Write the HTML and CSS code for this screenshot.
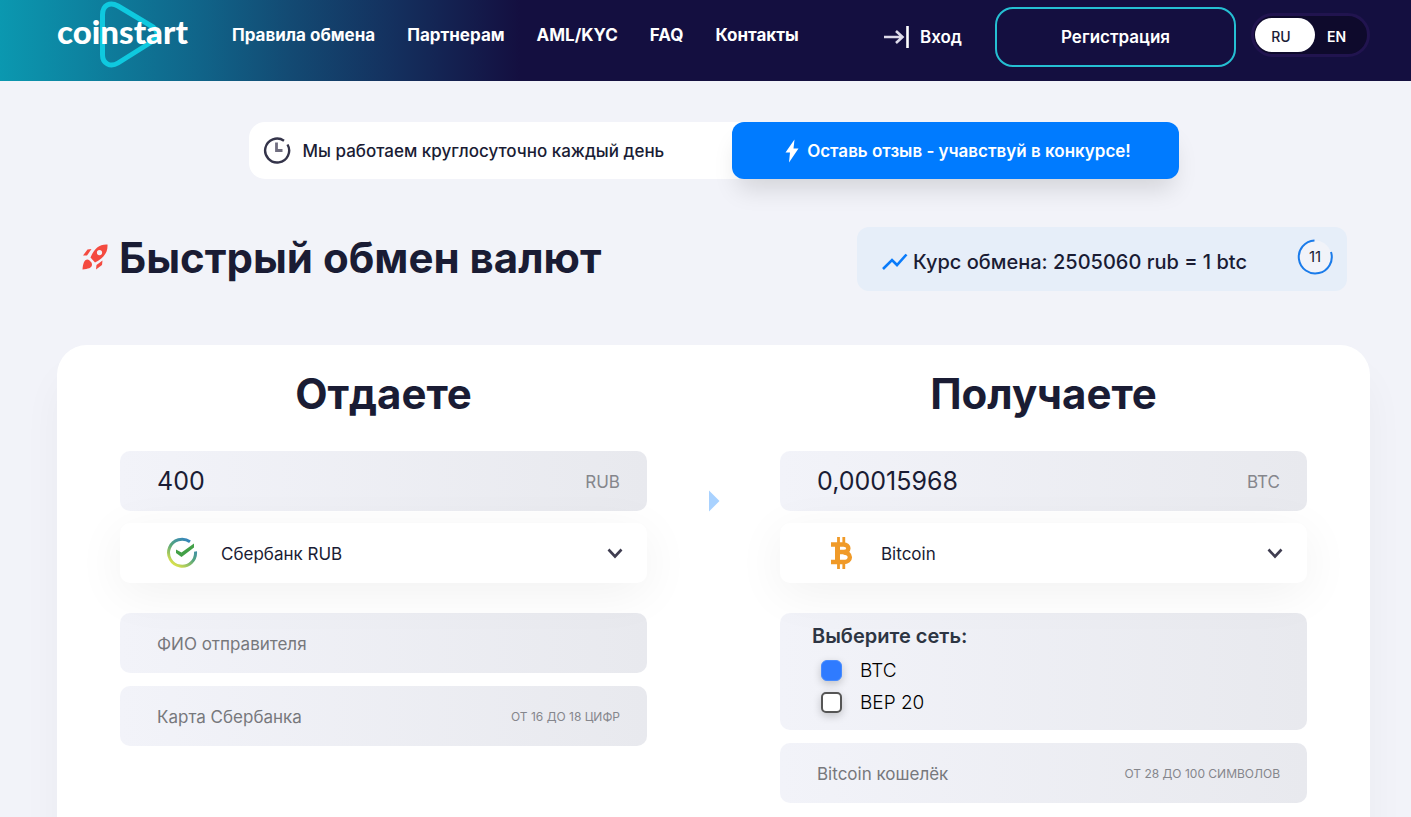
FILE: index.html
```html
<!DOCTYPE html>
<html lang="ru">
<head>
<meta charset="utf-8">
<meta name="viewport" content="width=device-width, initial-scale=1">
<title>Coinstart</title>
<link rel="stylesheet" href="styles.css">
</head>
<body>
<header class="header">
  <a class="logo" href="#">
    <svg class="logo-mark" width="64" height="68" viewBox="0 0 64 68" fill="none" stroke="#0fc9df" stroke-width="5" stroke-linejoin="round"><path d="M4.500 14C4.500 4 12 0.500 20 5L55 26Q63 33 55 40L20 62C12 67 4.500 62 4.500 54Z"/></svg>
    <span class="logo-text">coinstart</span>
  </a>
  <nav class="nav">
    <a href="#">Правила обмена</a>
    <a href="#">Партнерам</a>
    <a href="#">AML/KYC</a>
    <a href="#">FAQ</a>
    <a href="#">Контакты</a>
  </nav>
  <a class="login" href="#">
    <svg width="26" height="24" viewBox="0 0 26 24" fill="none" stroke="#fff"><path d="M0 12H18M12 6L18.500 12L12 18" stroke-width="2.600" stroke="#dedbea"/><path d="M23.500 1V23" stroke-width="2.600"/></svg>
    Вход
  </a>
  <button class="register" type="button">Регистрация</button>
  <div class="lang">
    <button class="lang-item lang-active" type="button">RU</button>
    <button class="lang-item" type="button">EN</button>
  </div>
</header>

<main class="main">
  <div class="notice">
    <div class="notice-info">
      <svg width="28" height="28" viewBox="0 0 28 28" fill="none" stroke="#34344a" stroke-width="2.400"><path d="M21 3.700A12 12 0 1 0 24.500 7.500"/><path d="M13.500 5.500V13.500H19.500" stroke="#706e80" stroke-width="2.800"/></svg>
      Мы работаем круглосуточно каждый день
    </div>
    <a class="notice-link" href="#">
      <svg width="14" height="24" viewBox="0 0 14 24" fill="#fff"><path d="M9.500 0.500L0.500 13.500H5L4 23.500L13.500 9.500H8.500Z"/></svg>
      Оставь отзыв - учавствуй в конкурсе!
    </a>
  </div>

  <div class="top">
    <h1 class="title">
      <svg width="26" height="26" viewBox="0 0 26 26" fill="#f44a40"><path fill-rule="evenodd" d="M25.500 0.500C17 0 12 5 8.500 13.500L13 18.500C21 14.500 26 9 25.500 0.500ZM17.500 6A2.600 2.600 0 1 1 17.500 11.200A2.600 2.600 0 1 1 17.500 6Z"/><path d="M9.500 5L5.500 5.500L1 11.500L5 11.500Z"/><path d="M20.500 16.500L20 21L14 25.500L14.500 21Z"/><path d="M5.500 15.500C2 15.500 1 20 0.500 25.500C6 25 10 24 10 20.500Q10 18.500 8.500 17.500Q7 15.500 5.500 15.500Z"/></svg>
      Быстрый обмен валют
    </h1>
    <div class="rate">
      <svg width="26" height="18" viewBox="0 0 26 18" fill="none" stroke="#0a7bfa" stroke-width="2.600"><path d="M1 16L10 7L15 12L24.500 1.500"/></svg>
      <span class="rate-text">Курс обмена: 2505060 rub = 1 btc</span>
      <span class="timer">
        <svg width="36" height="36" viewBox="0 0 36 36"><circle cx="18" cy="18" r="16.500" fill="#f1f3f9"/><path d="M17.500 1.500A16.500 16.500 0 1 0 34 13" fill="none" stroke="#1a7bea" stroke-width="2"/></svg>
        <span class="timer-value">11</span>
      </span>
    </div>
  </div>

  <form class="card">
    <section class="column">
      <h2 class="heading">Отдаете</h2>
      <label class="field">
        <input class="amount" type="text" value="400" aria-label="Сумма RUB">
        <span class="unit">RUB</span>
      </label>
      <div class="picker">
        <svg class="picker-icon" width="32" height="32" viewBox="0 0 32 32" fill="none">
          <defs><linearGradient id="sber" x1="0.850" y1="0.100" x2="0.250" y2="0.950"><stop offset="0" stop-color="#3585bd"/><stop offset="0.500" stop-color="#55a57c"/><stop offset="1" stop-color="#d5df4e"/></linearGradient></defs>
          <path d="M24 4.800A13.500 13.500 0 1 0 29.500 14.500" stroke="url(#sber)" stroke-width="3"/><path d="M10 12.500V16L15.500 20L28 10.500V6.500L15.500 15.500Z" fill="#43a047"/>
        </svg>
        <select class="select" aria-label="Отдаваемая валюта"><option>Сбербанк RUB</option></select>
        <svg class="picker-arrow" width="16" height="11" viewBox="0 0 16 11" fill="none" stroke="#3f3d50" stroke-width="2.600"><path d="M1.500 1.500L8 8.500L14.500 1.500"/></svg>
      </div>
      <label class="field">
        <input class="text" type="text" placeholder="ФИО отправителя" aria-label="ФИО отправителя">
      </label>
      <label class="field">
        <input class="text" type="text" placeholder="Карта Сбербанка" aria-label="Карта Сбербанка">
        <span class="hint">ОТ 16 ДО 18 ЦИФР</span>
      </label>
    </section>

    <svg class="direction" width="12" height="22" viewBox="0 0 12 22" fill="#a9d2ff"><path d="M1 0.500V21.500L11.500 11Z"/></svg>

    <section class="column">
      <h2 class="heading">Получаете</h2>
      <label class="field">
        <input class="amount" type="text" value="0,00015968" aria-label="Сумма BTC">
        <span class="unit">BTC</span>
      </label>
      <div class="picker">
        <svg class="picker-icon" width="32" height="32" viewBox="0 0 32 32" fill="none" stroke="#f09a28">
          <path d="M12.500 0V6M17.800 0V6M12.500 26V32M17.800 26V32" stroke-width="2.800"/>
          <path d="M5 7.500H17.500C24 7.500 24 15 17.500 15H12M17.500 15.500C26 15.500 26 25 17.500 25H5" stroke-width="4.400"/><path d="M11.500 6V26" stroke-width="5"/>
        </svg>
        <select class="select" aria-label="Получаемая валюта"><option>Bitcoin</option></select>
        <svg class="picker-arrow" width="16" height="11" viewBox="0 0 16 11" fill="none" stroke="#3f3d50" stroke-width="2.600"><path d="M1.500 1.500L8 8.500L14.500 1.500"/></svg>
      </div>
      <fieldset class="network">
        <legend class="network-title">Выберите сеть:</legend>
        <label class="option"><input class="check" type="checkbox" checked>BTC</label>
        <label class="option"><input class="check" type="checkbox">BEP 20</label>
      </fieldset>
      <label class="field">
        <input class="text" type="text" placeholder="Bitcoin кошелёк" aria-label="Bitcoin кошелёк">
        <span class="hint">ОТ 28 ДО 100 СИМВОЛОВ</span>
      </label>
    </section>
  </form>
</main>
</body>
</html>
```
FILE: styles.css
```css
* { box-sizing: border-box; }

body {
  margin: 0;
  min-height: 100vh;
  display: flex;
  flex-direction: column;
  background: #f2f3f9;
  color: #1a1c34;
  font-family: Inter, "Noto Sans", sans-serif;
}

a { color: inherit; text-decoration: none; }
button, input, select { font: inherit; color: inherit; }
svg { flex: none; display: block; }

.header {
  display: flex;
  align-items: center;
  height: 81px;
  padding: 0 41px 8px 57px;
  background: linear-gradient(90deg, #0b98b0 0, #106489 200px, #134a73 290px, #14315f 390px, #140f40 520px);
  color: #fff;
}

.logo {
  position: relative;
  width: 132px;
  font-family: Lato, sans-serif;
  font-size: 33px;
  font-weight: 900;
  line-height: 40px;
  padding-bottom: 12px;
}
.logo-mark { position: absolute; left: 41px; top: -10px; }
.logo-text { position: relative; }

.nav {
  display: flex;
  gap: 32px;
  margin-left: 43px;
  padding-bottom: 4px;
  font-size: 17px;
  font-weight: 700;
  line-height: 24px;
  white-space: nowrap;
}

.login {
  display: flex;
  align-items: center;
  gap: 10px;
  margin-left: auto;
  font-size: 17px;
  font-weight: 600;
}

.register {
  width: 241px;
  height: 60px;
  margin-left: 33px;
  border: 2px solid #25bfd2;
  border-radius: 18px;
  background: none;
  font-size: 17px;
  font-weight: 600;
}

.lang {
  display: flex;
  width: 119px;
  height: 44px;
  margin: 0 0 3px 15px;
  padding: 2px 1px;
  border: 3px solid #21144f;
  border-radius: 22px;
  background: #0e0a2c;
}
.lang-item {
  flex: 1;
  padding: 2px 8px 0 0;
  border: 0;
  border-radius: 18px;
  background: none;
  font-size: 14px;
  font-weight: 600;
}
.lang-active { flex: 0 0 60px; background: #fff; color: #1a1c34; font-weight: 500; }

.main {
  flex: 1;
  display: flex;
  flex-direction: column;
  padding: 41px 41px 0 57px;
}

.notice {
  display: flex;
  width: 100%;
  max-width: 930px;
  height: 57px;
  margin: 0 auto;
  border-radius: 16px;
  background: #fff;
}
.notice-info {
  flex: 1;
  display: flex;
  align-items: center;
  gap: 12px;
  padding-left: 14px;
  font-size: 17px;
  font-weight: 500;
}
.notice-link {
  flex: 0 0 447px;
  display: flex;
  align-items: center;
  justify-content: center;
  gap: 8px;
  padding-left: 6px;
  border-radius: 12px;
  background: #007bff;
  box-shadow: 0 16px 24px -6px rgba(0, 0, 0, 0.13);
  color: #fff;
  font-size: 17px;
  font-weight: 600;
}

.top {
  display: flex;
  justify-content: space-between;
  margin-top: 48px;
  padding: 0 23px 0 25px;
}
.title {
  display: flex;
  align-items: center;
  gap: 11px;
  height: 60px;
  margin: 0;
  font-size: 42px;
  font-weight: 700;
  white-space: nowrap;
}
.rate {
  display: flex;
  align-items: center;
  gap: 5px;
  width: 490px;
  height: 64px;
  padding: 5px 14px 0 25px;
  border-radius: 12px;
  background: #e6eef9;
  font-size: 20px;
  font-weight: 500;
}
.timer {
  display: grid;
  place-items: center;
  margin-left: auto;
  padding-bottom: 10px;
  font-size: 15px;
  font-weight: 400;
}
.timer > * { grid-area: 1 / 1; }

.card {
  flex: 1;
  display: flex;
  justify-content: space-between;
  margin-top: 54px;
  padding: 24px 63px 14px;
  border-radius: 30px 30px 0 0;
  background: #fff;
  box-shadow: 0 30px 40px rgba(20, 20, 60, 0.04);
}
.column { flex: 0 1 527px; min-width: 0; }
.direction { margin-top: 121px; }

.heading {
  margin: 0 0 32px;
  font-size: 42px;
  font-weight: 700;
  line-height: 50px;
  text-align: center;
}

.field {
  display: flex;
  align-items: center;
  height: 60px;
  margin-bottom: 13px;
  padding: 0 27px 0 37px;
  border-radius: 10px;
  background: linear-gradient(90deg, #f2f3f9, #e8e9ee);
  color: #85868c;
}
.amount, .text {
  flex: 1;
  min-width: 0;
  padding: 0;
  border: 0;
  outline: 0;
  background: none;
}
.amount { color: #1a1c34; font-size: 25px; }
.text { padding-top: 2px; font-size: 17px; }
.text::placeholder { color: #77787c; opacity: 1; }
.unit { padding-top: 2px; font-size: 17px; }
.hint { font-size: 12px; }

.picker {
  position: relative;
  height: 60px;
  margin: -1px 0 30px;
  border-radius: 10px;
  background: #fff;
  box-shadow: 0 10px 50px rgba(0, 0, 0, 0.06);
}
.select {
  width: 100%;
  height: 100%;
  padding: 2px 60px 0 101px;
  border: 0;
  border-radius: 10px;
  outline: 0;
  appearance: none;
  background: none;
  font-size: 17px;
}
.picker-icon { position: absolute; left: 46px; top: 14px; }
.picker-arrow { position: absolute; right: 24px; top: 25px; pointer-events: none; }

.network {
  height: 117px;
  margin: 0 0 13px;
  padding: 9px 32px 0;
  border: 0;
  border-radius: 10px;
  background: linear-gradient(90deg, #f2f3f9, #e8e9ee);
}
.network-title {
  float: left;
  width: 100%;
  padding: 0;
  margin-bottom: 4px;
  color: #2d3543;
  font-size: 20px;
  font-weight: 600;
  line-height: 28px;
}
.option {
  display: flex;
  align-items: center;
  gap: 18px;
  clear: both;
  height: 32px;
  padding-left: 9px;
  color: #000;
  font-size: 19px;
  font-weight: 300;
}
.check {
  width: 21px;
  height: 21px;
  margin: 0;
  border: 2px solid #555;
  border-radius: 5px;
  appearance: none;
  background: #fff;
  box-shadow: 0 3px 8px rgba(0, 0, 0, 0.2);
}
.check:checked { border: 1px solid #468bff; border-radius: 6px; background: #2f7bff; }
```
